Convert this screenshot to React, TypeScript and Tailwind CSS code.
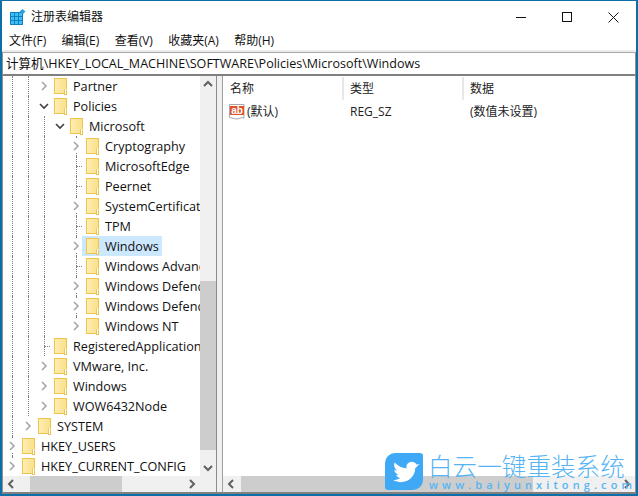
import React from "react";

const FONT = "font-['Open_Sans','Noto_Sans_CJK_SC',sans-serif]";

type Row = { level: number; guides: number[]; label: string; arrow?: "right" | "down" | "dot"; selected?: boolean; own?: "full" | "half" };

const rows: Row[] = [
  { level: 3, guides: [0, 1], label: "Partner", arrow: "right" },
  { level: 3, guides: [0, 1], label: "Policies", arrow: "down" },
  { level: 4, guides: [0, 1, 2], label: "Microsoft", arrow: "down" },
  { level: 5, guides: [0, 1, 2], own: "full", label: "Cryptography", arrow: "right" },
  { level: 5, guides: [0, 1, 2], own: "full", label: "MicrosoftEdge", arrow: "dot" },
  { level: 5, guides: [0, 1, 2], own: "full", label: "Peernet", arrow: "dot" },
  { level: 5, guides: [0, 1, 2], own: "full", label: "SystemCertificates", arrow: "right" },
  { level: 5, guides: [0, 1, 2], own: "full", label: "TPM", arrow: "dot" },
  { level: 5, guides: [0, 1, 2], own: "full", label: "Windows", arrow: "right", selected: true },
  { level: 5, guides: [0, 1, 2], own: "full", label: "Windows Advanced", arrow: "dot" },
  { level: 5, guides: [0, 1, 2], own: "full", label: "Windows Defender", arrow: "right" },
  { level: 5, guides: [0, 1, 2], own: "full", label: "Windows Defender", arrow: "right" },
  { level: 5, guides: [0, 1, 2], own: "half", label: "Windows NT", arrow: "right" },
  { level: 3, guides: [0, 1], own: "full", label: "RegisteredApplications", arrow: "dot" },
  { level: 3, guides: [0, 1], label: "VMware, Inc.", arrow: "right" },
  { level: 3, guides: [0, 1], label: "Windows", arrow: "right" },
  { level: 3, guides: [0, 1], label: "WOW6432Node", arrow: "right" },
  { level: 2, guides: [0], label: "SYSTEM", arrow: "right" },
  { level: 1, guides: [], own: "full", label: "HKEY_USERS", arrow: "right" },
  { level: 1, guides: [], own: "half", label: "HKEY_CURRENT_CONFIG", arrow: "right" },
];

function Folder() {
  return (
    <svg width="14" height="17" viewBox="0 0 14 17" className="shrink-0">
      <defs>
        <linearGradient id="fld" x1="0" x2="1" y1="0" y2="0">
          <stop offset="0" stopColor="#fdeeb4" />
          <stop offset="1" stopColor="#fcdf86" />
        </linearGradient>
      </defs>
      <rect x="0.5" y="0.5" width="12" height="15" fill="url(#fld)" stroke="#eec450" />
      <rect x="10" y="11" width="3" height="5" fill="#fff" />
      <path d="M10.500 11v5M12.500 11.500v5M10 16.500h3" stroke="#eec450" fill="none" />
    </svg>
  );
}

function Arrow({ kind }: { kind?: Row["arrow"] }) {
  if (kind === "dot") return <span className="ml-[8px] w-[6px] border-t border-dotted border-[#808080]" />;
  if (kind === "down")
    return (
      <svg width="16" height="12" viewBox="0 2 16 12" className="relative bg-white">
        <path d="M4 6l4 4 4-4" fill="none" stroke="#404040" strokeWidth="1.6" />
      </svg>
    );
  return (
    <svg width="16" height="14" viewBox="0 1 16 14" className="relative bg-white">
      <path d="M6 4l4 4-4 4" fill="none" stroke="#a6a6a6" strokeWidth="1.6" />
    </svg>
  );
}

function TreeRow({ row }: { row: Row }) {
  const cells = Array.from({ length: row.level - 1 }, (_, i) => i);
  return (
    <div className="flex h-5 items-center whitespace-nowrap">
      <div className="w-[1px] shrink-0" />
      {cells.map((i) => (
        <div key={i} className="relative h-5 w-4 shrink-0">
          {row.guides.includes(i) && <span className="absolute left-[8px] top-0 h-5 border-l border-dotted border-[#808080]" />}
        </div>
      ))}
      <div className="relative flex h-5 w-4 shrink-0 items-center">
        {row.own === "full" && <span className="absolute left-[8px] top-0 h-5 border-l border-dotted border-[#808080]" />}
        {row.own === "half" && <span className="absolute left-[8px] top-0 h-[10px] border-l border-dotted border-[#808080]" />}
        <Arrow kind={row.arrow} />
      </div>
      <div className={`relative -ml-[2px] flex h-5 items-center pl-[4px] pr-[3px] ${row.selected ? "bg-[#cce8ff]" : ""}`}>
        <Folder />
        <span className="ml-[5px] text-[12.65px] text-[#111]">{row.label}</span>
      </div>
    </div>
  );
}

function Chev({ d, color = "#606060" }: { d: string; color?: string }) {
  return (
    <svg width="16" height="16" viewBox="0 0 16 16" className="shrink-0">
      <path d={d} fill="none" stroke={color} strokeWidth="2" />
    </svg>
  );
}

const UP = "M4 10l4-4 4 4";
const DOWN = "M4 6l4 4 4-4";
const LEFT = "M10 4l-4 4 4 4";
const RIGHT = "M6 4l4 4-4 4";

function Watermark() {
  return (
    <div className="absolute left-[383px] top-[452px] flex gap-[5px]">
      <div className="h-[37px] w-[38px] rounded-tr-[3px] rounded-tl-[10px] rounded-bl-[3px] rounded-br-[10px] bg-[#3fa9f5]">
        <svg width="38" height="37" viewBox="0 0 38 37">
          <path
            fill="#fff"
            d="M35 11l-3.500.500c-1.500-2.500-5-3.500-7.500-2-2.500 1.500-3 4-2.500 6-4.500-.500-8.500-2.500-12-6-1 3 0 6 2.500 8-1 0-2-.200-2.800-.700.300 2.500 2 4 4.500 5l-2.500.300c.800 1.700 2.300 2.700 4 3-2 1.400-4.200 2-7 2 3 1.500 6 2.200 9 2 7-.500 13-6 13-14 1.200-.800 2.500-2.200 3-3.100z"
          />
        </svg>
      </div>
      <div className="flex flex-col">
        <span className="-mt-[1px] font-['Noto_Sans_CJK_SC',sans-serif] text-[24.5px] leading-[27px] font-light tracking-[0.1px] text-[#56b4f3]">白云一键重装系统</span>
        <span className={`ml-[1px] text-[11px] leading-[11px] font-semibold tracking-[4.1px] text-[#56b4f3] ${FONT}`}>www.baiyunxitong.com</span>
      </div>
    </div>
  );
}

export default function App() {
  return (
    <div className={`relative flex h-[496px] w-[638px] flex-col overflow-hidden border-x-2 border-t-[1px] border-b-2 border-[#0d6ea8] bg-white ${FONT}`}>
      <div className="flex h-[30px] shrink-0 items-center pt-[2px]">
        <svg width="16" height="16" viewBox="0 0 16 16" className="ml-[8px] shrink-0">
          <rect x="0" y="3" width="13" height="13" fill="#3cc0f2" />
          <path d="M.5 3.500h12v12H.5zM4.500 3v13M8.500 3v13M0 7.500h13M0 11.500h13" stroke="#0f7cc4" strokeWidth="1" fill="none" />
          <path d="M12.500 0l3 2.500-3 3-3-3z" fill="#2f9fdc" />
        </svg>
        <span className="ml-[5px] text-[12px] text-[#111]">注册表编辑器</span>
        <div className="flex-1" />
        <div className="flex h-full items-center">
          <div className="flex w-[46px] items-center justify-center">
            <svg width="10" height="10" viewBox="0 0 10 10"><path d="M0 5.500h10" stroke="#111" /></svg>
          </div>
          <div className="flex w-[46px] items-center justify-center">
            <svg width="10" height="10" viewBox="0 0 10 10"><rect x="0.500" y="0.500" width="9" height="9" fill="none" stroke="#111" /></svg>
          </div>
          <div className="flex w-[46px] items-center justify-center">
            <svg width="11" height="11" viewBox="0 0 11 11"><path d="M.5.500l10 10M10.500.500l-10 10" stroke="#111" /></svg>
          </div>
        </div>
      </div>
      <div className="flex h-[19px] shrink-0 items-center gap-[15.3px] pl-[7px] pt-[1px] text-[12px] text-[#111]">
        <span>文件(F)</span>
        <span>编辑(E)</span>
        <span>查看(V)</span>
        <span>收藏夹(A)</span>
        <span>帮助(H)</span>
      </div>
      <div className="h-[2px] shrink-0 bg-[#ececec]" />
      <div className="flex h-[24px] shrink-0 items-center border-x border-t border-b-2 border-x-[#909090] border-t-[#a8a8a8] border-b-[#808080] pl-[3px] pt-[2px] text-[12.56px] text-[#111]">
        <span>计算机\HKEY_LOCAL_MACHINE\SOFTWARE\Policies\Microsoft\Windows</span>
      </div>
      <div className="flex min-h-0 flex-1 border-x border-b-2 border-x-[#909090] border-b-[#808080]">
        <div className="flex w-[213px] shrink-0 flex-col">
          <div className="flex min-h-0 flex-1">
            <div className="min-w-0 flex-1 overflow-hidden">
              {rows.map((r, i) => (
                <TreeRow key={i} row={r} />
              ))}
            </div>
            <div className="flex w-[16px] shrink-0 flex-col items-center bg-[#f0f0f0]">
              <Chev d={UP} />
              <div className="h-[189px] w-full" />
              <div className="h-[169px] w-full bg-[#cdcdcd]" />
              <div className="flex-1" />
              <Chev d={DOWN} />
            </div>
          </div>
          <div className="flex h-[16px] shrink-0 items-center bg-[#f0f0f0]">
            <Chev d={LEFT} />
            <div className="ml-[11px] h-full w-[92px] bg-[#cdcdcd]" />
            <div className="flex-1" />
            <Chev d={RIGHT} />
            <div className="w-[16px] shrink-0" />
          </div>
        </div>
        <div className="w-[7px] shrink-0 border-x border-l-[#8c8c8c] border-r-[#a0a0a0] bg-[#f0f0f0]" />
        <div className="flex min-w-0 flex-1 flex-col">
          <div className="flex min-h-0 flex-1 flex-col">
            <div className="flex h-[26px] shrink-0 items-start pt-px text-[12px] text-[#222]">
              <div className="flex h-[23px] w-[121px] items-center border-r-2 border-[#e8e8e8] pl-[7px]">名称</div>
              <div className="flex h-[23px] w-[120px] items-center border-r-2 border-[#e8e8e8] pl-[6px]">类型</div>
              <div className="flex h-[23px] flex-1 items-center pl-[6px]">数据</div>
            </div>
            <div className="flex h-[19px] items-center text-[12px] text-[#222]">
              <div className="flex w-[121px] items-center pl-[6px]">
                <svg width="17" height="17" viewBox="0 0 17 17" className="shrink-0">
                  <path d="M.5 1.500h14.500v13.500c-3-1.500-5 1.500-8 1l-6.500-1.500z" fill="#fff" stroke="#a8a8a8" />
                  <rect x="1" y="3" width="14" height="9" fill="#e2532c" />
                  <text x="8" y="10.800" textAnchor="middle" fontSize="10" fontWeight="700" fill="#fff" fontFamily="Liberation Sans">ab</text>
                </svg>
                <span className="ml-[1px]">(默认)</span>
              </div>
              <div className="w-[120px] pl-[6px]">REG_SZ</div>
              <div className="pl-[6px]">(数值未设置)</div>
            </div>
          </div>
          <div className="flex h-[16px] shrink-0 items-center bg-[#f0f0f0]">
            <Chev d={LEFT} />
            <div className="ml-[2px] h-full w-[292px] bg-[#cdcdcd]" />
            <div className="flex-1" />
            <Chev d={RIGHT} />
          </div>
        </div>
      </div>
      <Watermark />
    </div>
  );
}
